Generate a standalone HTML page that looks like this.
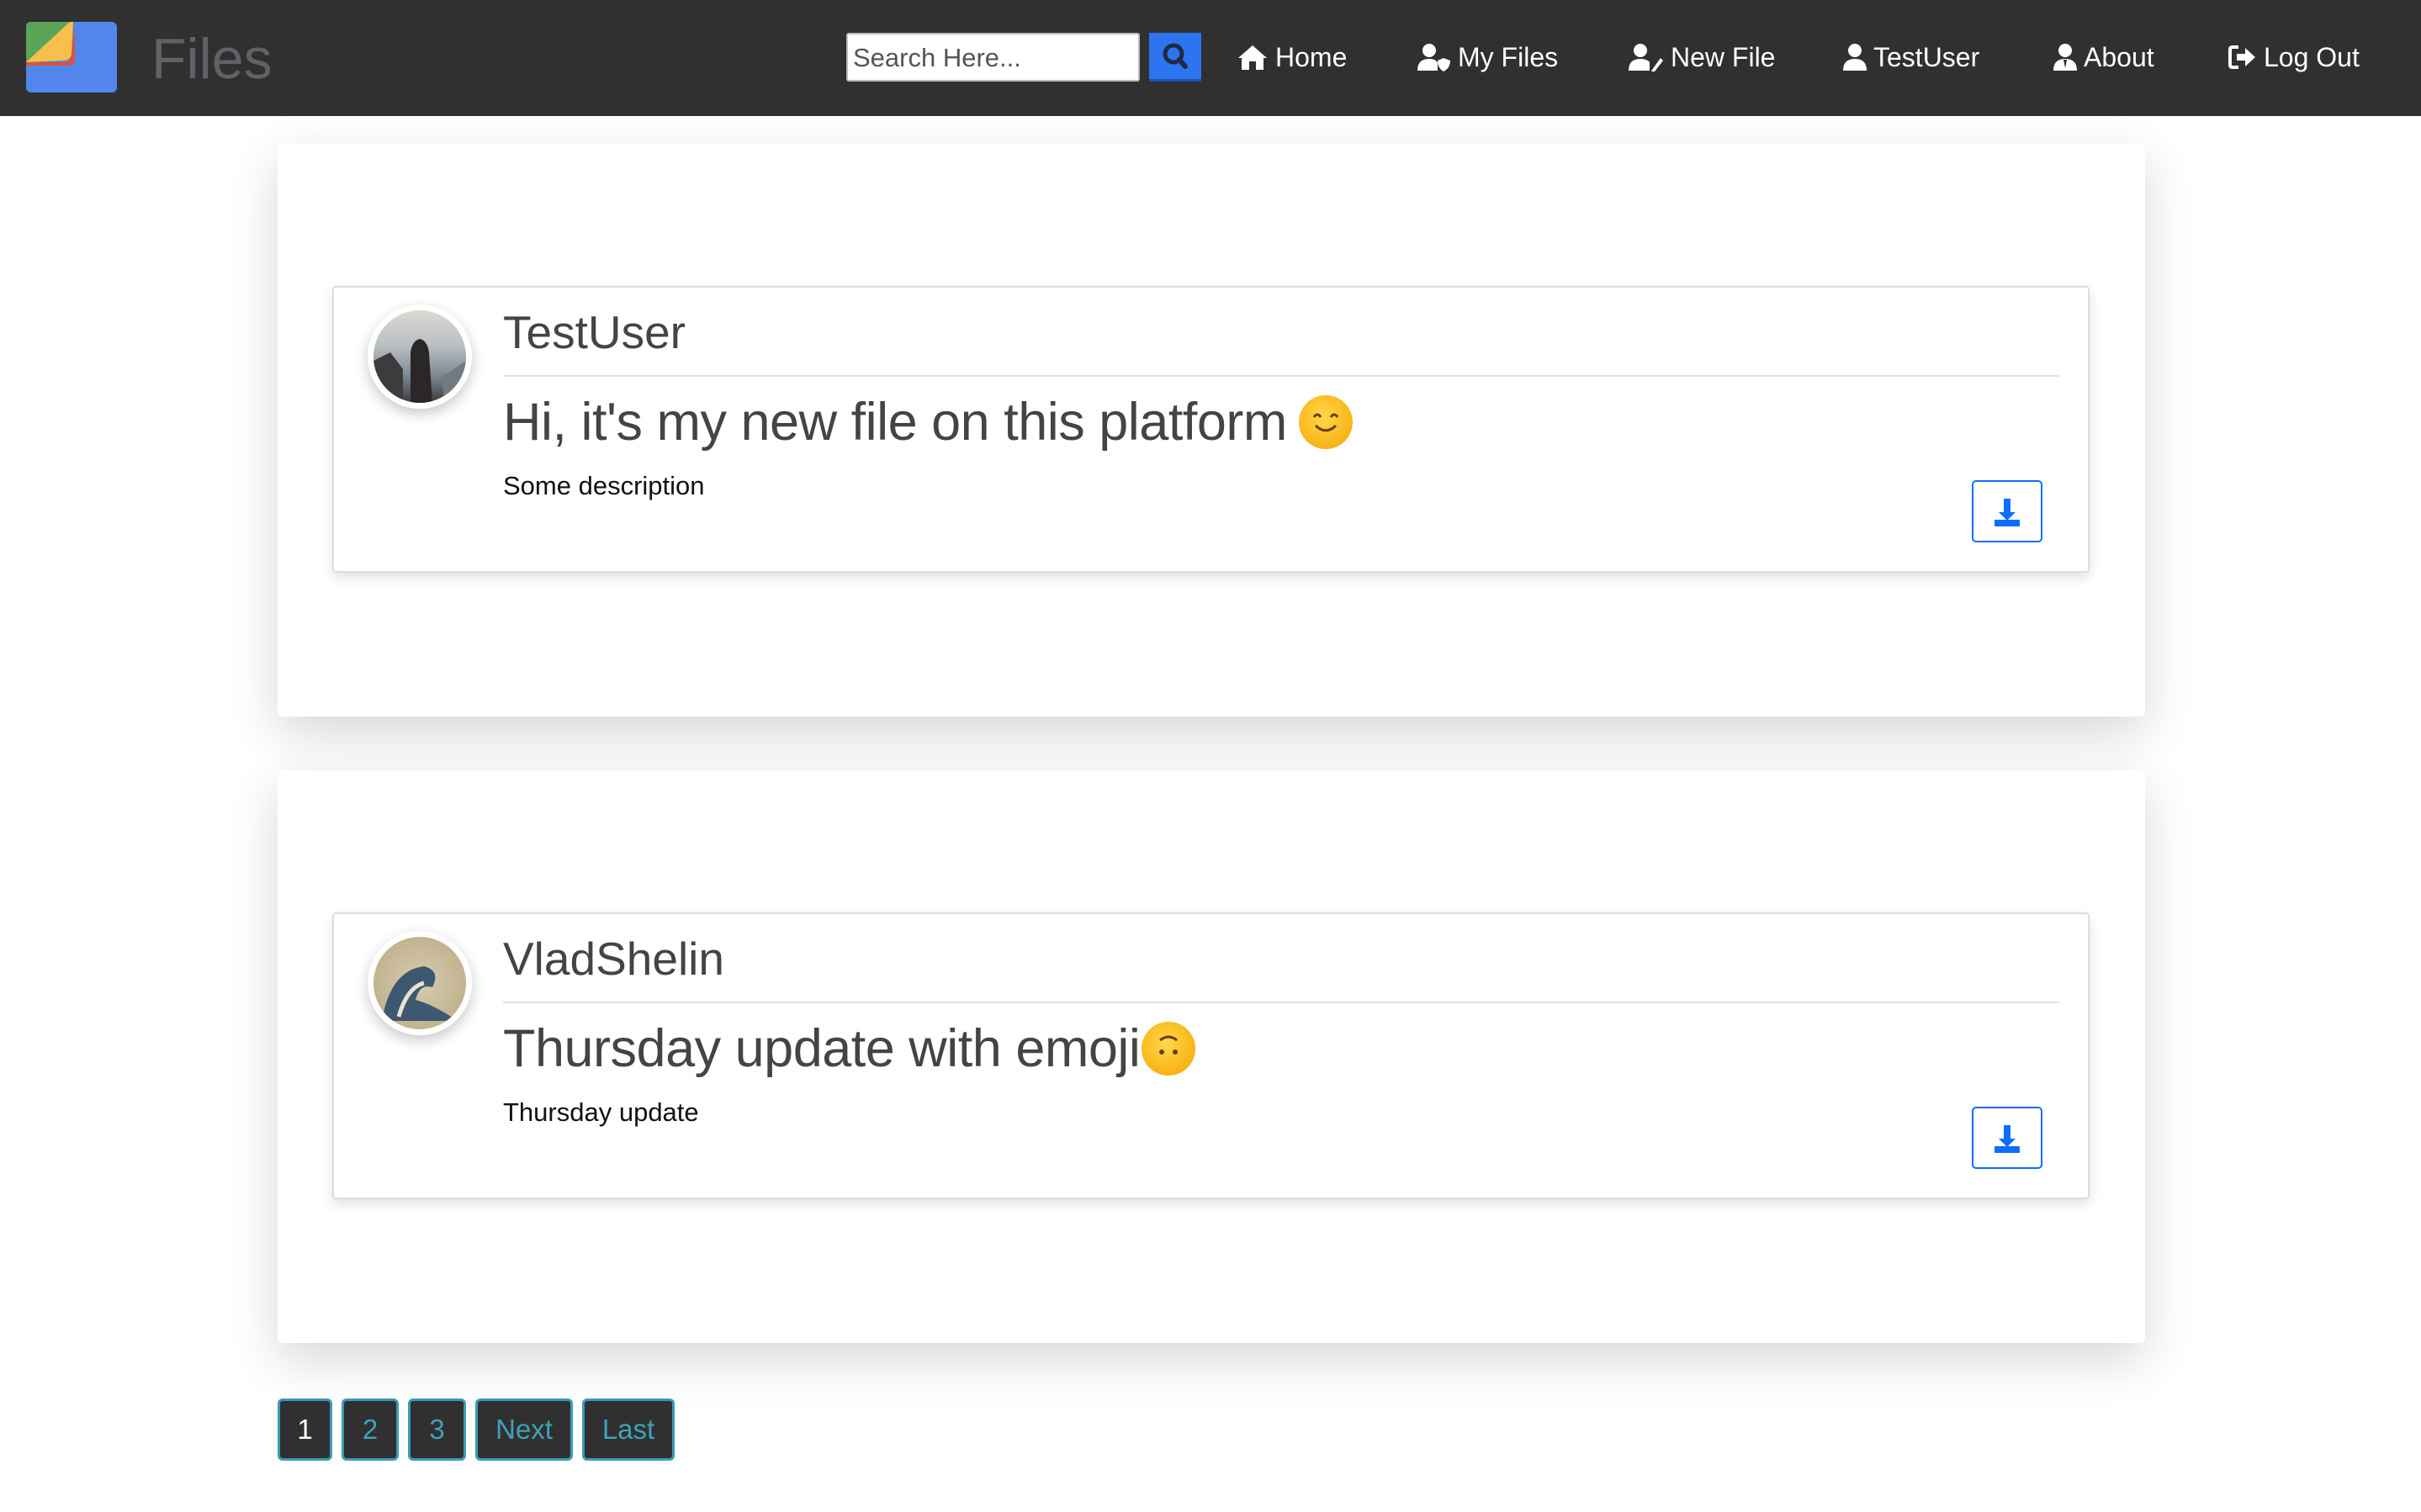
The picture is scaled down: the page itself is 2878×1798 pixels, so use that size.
<!DOCTYPE html>
<html><head><meta charset="utf-8"><style>
*{box-sizing:border-box;margin:0;padding:0}
body{width:2878px;height:1798px;background:#fff;font-family:"Liberation Sans",sans-serif;position:relative;overflow:hidden}
.nav{position:absolute;left:0;top:0;width:2878px;height:138px;background:#303030}
.abs{position:absolute}
.navi{position:absolute;top:48px;color:#fff;font-size:32px;display:flex;align-items:center;gap:8px;line-height:40px}
.panel{position:absolute;left:330px;width:2220px;height:681px;background:#fff;border-radius:6px;box-shadow:0 20px 60px rgba(0,0,0,.16)}
.card{position:absolute;left:65px;top:169px;width:2089px;height:341px;border:2px solid #ddd;border-radius:4px;background:#fff;box-shadow:0 6px 14px rgba(0,0,0,.12)}
.av{position:absolute;left:40px;top:20px;width:124px;height:124px;border-radius:50%;border:7px solid #fff;box-shadow:0 6px 16px rgba(0,0,0,.22);overflow:hidden}
.user{position:absolute;left:201px;top:20px;font-size:55px;color:#444;line-height:66px}
.hr{position:absolute;left:201px;top:104px;width:1850px;height:2px;background:#e3e3e3}
.title{position:absolute;left:201px;top:120px;font-size:63px;color:#444;line-height:80px;display:flex;align-items:center;gap:14px;letter-spacing:-0.5px}
.desc{position:absolute;left:201px;top:218px;font-size:31px;color:#111}
.dl{position:absolute;left:1947px;top:229px;width:84px;height:74px;border:2px solid #0d6efd;border-radius:5px}
.emo{width:64px;height:64px;border-radius:50%;background:radial-gradient(circle at 45% 40%,#ffd84a,#f6a300);position:relative;display:inline-block}
.pg{position:absolute;top:1663px;height:74px;background:#303030;border:3px solid #3a9cb4;border-radius:6px;color:#3fa2b9;font-size:33px;display:flex;align-items:center;justify-content:center}
</style></head><body>
<div class="nav">
 <svg class="abs" style="left:31px;top:26px" width="108" height="84" viewBox="0 0 108 84">
  <rect x="0" y="0" width="108" height="84" rx="6" fill="#5187ec"/>
  <path d="M0 6 Q0 0 6 0 H52 L0 50Z" fill="#5aa55a"/>
  <path d="M58 0 L58 44 Q58 52 50 52 L0 52 L0 48 L44 48 Q54 48 54 38 Z" fill="#dd5136"/>
  <path d="M52 0 L56 0 L54 38 Q53 46 44 46 L0 48 Z" fill="#f6c04a"/>
 </svg>
 <div class="abs" style="left:180px;top:30px;font-size:68px;color:#5f6266;line-height:80px">Files</div>
 <div class="abs" style="left:1006px;top:39px;width:349px;height:58px;background:#fff;border:2px solid #bbb;border-radius:3px;font-size:31px;color:#555;padding:8px 6px;line-height:40px">Search Here...</div>
 <div class="abs" style="left:1366px;top:39px;width:62px;height:58px;background:#2d75f0;border-bottom:3px solid #1d50b0">
  <svg width="62" height="56" viewBox="0 0 62 56"><circle cx="29" cy="25" r="10" fill="none" stroke="#1f2a44" stroke-width="5"/><path d="M36 32 L43 40" stroke="#1f2a44" stroke-width="6" stroke-linecap="round"/></svg></div>
 <div class="navi" style="left:1470px"><svg width="38" height="32" viewBox="0 0 38 32"><path d="M19 2 L2 17 L6 17 L6 31 L15 31 L15 21 L23 21 L23 31 L32 31 L32 17 L36 17 Z" fill="#fff"/></svg>Home</div>
 <div class="navi" style="left:1685px"><svg width="40" height="34" viewBox="0 0 40 34"><circle cx="14" cy="9" r="8" fill="#fff"/><path d="M0 33 Q0 19 14 19 Q22 19 24 24 L24 33Z" fill="#fff"/><path d="M31 18 L39 21 Q39 30 31 34 Q24 30 24 21Z" fill="#fff"/></svg>My Files</div>
 <div class="navi" style="left:1936px"><svg width="42" height="34" viewBox="0 0 42 34"><circle cx="14" cy="9" r="8" fill="#fff"/><path d="M0 33 Q0 19 14 19 Q22 19 25 23 L25 33Z" fill="#fff"/><path d="M28 32 L38 18 L41 21 L31 34 L27 34Z" fill="#fff"/></svg>New File</div>
 <div class="navi" style="left:2191px"><svg width="28" height="34" viewBox="0 0 28 34"><circle cx="14" cy="9" r="8" fill="#fff"/><path d="M0 33 Q0 19 14 19 Q28 19 28 33Z" fill="#fff"/></svg>TestUser</div>
 <div class="navi" style="left:2441px"><svg width="28" height="34" viewBox="0 0 28 34"><circle cx="14" cy="9" r="8" fill="#fff"/><path d="M0 33 Q0 19 14 19 Q28 19 28 33Z" fill="#fff"/><path d="M12 20 L16 20 L14 30Z" fill="#303030"/></svg>About</div>
 <div class="navi" style="left:2649px"><svg width="34" height="30" viewBox="0 0 34 30"><path d="M12 3 H5 Q2 3 2 6 V24 Q2 27 5 27 H12" fill="none" stroke="#fff" stroke-width="4"/><path d="M10 11 H20 V4 L32 15 L20 26 V19 H10Z" fill="#fff"/></svg>Log Out</div>
</div>

<div class="panel" style="top:171px">
 <div class="card">
  <div class="av" style="background:linear-gradient(180deg,#ddd9d3 0%,#b8bdc0 40%,#7e8a92 70%,#3a3a3c 100%)"><svg width="110" height="110" viewBox="0 0 110 110"><path d="M0 60 L20 50 L35 70 L35 110 L0 110Z" fill="#3c3b3d"/><path d="M44 110 L44 50 Q46 36 55 34 Q64 36 66 50 L70 110Z" fill="#2b2729"/><path d="M80 80 L110 60 L110 110 L85 110Z" fill="#6f7a82"/></svg></div>
  <div class="user">TestUser</div>
  <div class="hr"></div>
  <div class="title">Hi, it's my new file on this platform <span class="emo"><svg width="64" height="64" viewBox="0 0 64 64"><path d="M18 26 Q22 20 26 26 M38 26 Q42 20 46 26" stroke="#6b3b10" stroke-width="3" fill="none"/><path d="M20 36 Q32 48 44 36" stroke="#6b3b10" stroke-width="3" fill="none"/></svg></span></div>
  <div class="desc">Some description</div>
  <div class="dl"><svg width="80" height="70" viewBox="0 0 80 70"><path d="M36 20 H44 V36 H50 L40 46 L30 36 H36Z" fill="#0d6efd"/><rect x="25" y="45" width="30" height="8" rx="1" fill="#0d6efd"/></svg></div>
 </div>
</div>

<div class="panel" style="top:916px">
 <div class="card">
  <div class="av" style="background:radial-gradient(circle at 50% 50%,#d8ccb0,#b8a983)"><svg width="110" height="110" viewBox="0 0 110 110"><path d="M10 100 Q20 40 60 35 Q80 40 70 60 Q55 55 50 75 Q70 80 100 100Z" fill="#3d5870"/><path d="M30 95 Q40 60 60 55" stroke="#e8e2d0" stroke-width="5" fill="none"/></svg></div>
  <div class="user">VladShelin</div>
  <div class="hr"></div>
  <div class="title">Thursday update with emoji<span class="emo" style="margin-left:-12px"><svg width="64" height="64" viewBox="0 0 64 64"><circle cx="24" cy="36" r="3" fill="#6b3b10"/><circle cx="40" cy="36" r="3" fill="#6b3b10"/><path d="M22 22 Q32 14 42 22" stroke="#6b3b10" stroke-width="3" fill="none"/></svg></span></div>
  <div class="desc">Thursday update</div>
  <div class="dl"><svg width="80" height="70" viewBox="0 0 80 70"><path d="M36 20 H44 V36 H50 L40 46 L30 36 H36Z" fill="#0d6efd"/><rect x="25" y="45" width="30" height="8" rx="1" fill="#0d6efd"/></svg></div>
 </div>
</div>

<div class="pg" style="left:330px;width:65px;color:#fff">1</div>
<div class="pg" style="left:406px;width:68px">2</div>
<div class="pg" style="left:485px;width:69px">3</div>
<div class="pg" style="left:565px;width:116px">Next</div>
<div class="pg" style="left:692px;width:110px">Last</div>
</body></html>
